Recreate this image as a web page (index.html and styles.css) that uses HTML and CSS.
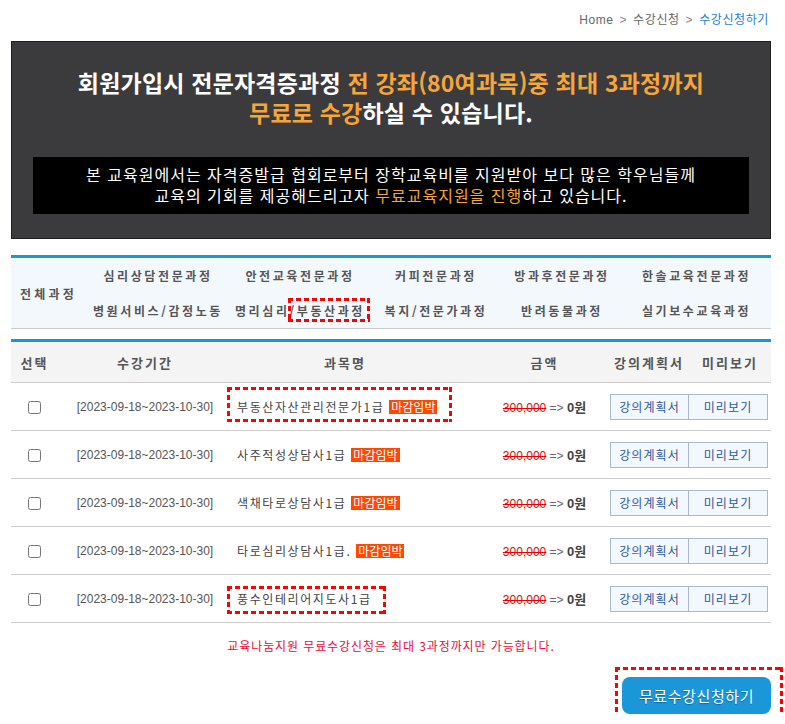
FILE: index.html
```html
<!DOCTYPE html>
<html lang="ko">

<head>
  <meta charset="UTF-8" />
  <meta name="viewport" content="width=device-width, initial-scale=1.0" />
  <title>수강신청하기</title>
  <link rel="stylesheet" href="styles.css">
</head>

<body>
  <div class="wrap">
    <div class="crumb">
      Home <span class="sep">&gt;</span> 수강신청 <span class="sep">&gt;</span> <span class="cur">수강신청하기</span>
    </div>

    <div class="banner">
      <h2>회원가입시 전문자격증과정 <em>전 강좌(80여과목)중 최대 3과정까지</em><br /><em>무료로 수강</em>하실 수 있습니다.</h2>
      <p class="notice">
        본 교육원에서는 자격증발급 협회로부터 장학교육비를 지원받아 보다 많은 학우님들께<br />
        교육의 기회를 제공해드리고자 <em>무료교육지원을 진행</em>하고 있습니다.
      </p>
    </div>

    <div class="cats">
      <div class="all">전체과정</div>
      <a>심리상담전문과정</a>
      <a>안전교육전문과정</a>
      <a>커피전문과정</a>
      <a>방과후전문과정</a>
      <a>한솔교육전문과정</a>
      <a>병원서비스/감정노동</a>
      <a>명리심리<span class="mark mark-nav">/부동산과정</span></a>
      <a>복지/전문가과정</a>
      <a>반려동물과정</a>
      <a>실기보수교육과정</a>
    </div>

    <table class="list">
      <colgroup>
        <col style="width:47px" />
        <col style="width:174px" />
        <col style="width:226px" />
        <col style="width:151px" />
        <col style="width:80px" />
        <col style="width:82px" />
      </colgroup>
      <thead>
        <tr>
          <th>선택</th>
          <th>수강기간</th>
          <th>과목명</th>
          <th class="th-price">금액</th>
          <th>강의계획서</th>
          <th>미리보기</th>
        </tr>
      </thead>
      <tbody>
        <tr>
          <td><input type="checkbox" /></td>
          <td class="date">[2023-09-18~2023-10-30]</td>
          <td class="title"><span class="mark mark-first">부동산자산관리전문가1급 <span class="badge">마감임박</span></span></td>
          <td class="price"><s>300,000</s> =&gt; <b>0원</b></td>
          <td class="btn-l"><a class="mini">강의계획서</a></td>
          <td class="btn-r"><a class="mini">미리보기</a></td>
        </tr>
        <tr>
          <td><input type="checkbox" /></td>
          <td class="date">[2023-09-18~2023-10-30]</td>
          <td class="title">사주적성상담사1급 <span class="badge">마감임박</span></td>
          <td class="price"><s>300,000</s> =&gt; <b>0원</b></td>
          <td class="btn-l"><a class="mini">강의계획서</a></td>
          <td class="btn-r"><a class="mini">미리보기</a></td>
        </tr>
        <tr>
          <td><input type="checkbox" /></td>
          <td class="date">[2023-09-18~2023-10-30]</td>
          <td class="title">색채타로상담사1급 <span class="badge">마감임박</span></td>
          <td class="price"><s>300,000</s> =&gt; <b>0원</b></td>
          <td class="btn-l"><a class="mini">강의계획서</a></td>
          <td class="btn-r"><a class="mini">미리보기</a></td>
        </tr>
        <tr>
          <td><input type="checkbox" /></td>
          <td class="date">[2023-09-18~2023-10-30]</td>
          <td class="title">타로심리상담사1급. <span class="badge">마감임박</span></td>
          <td class="price"><s>300,000</s> =&gt; <b>0원</b></td>
          <td class="btn-l"><a class="mini">강의계획서</a></td>
          <td class="btn-r"><a class="mini">미리보기</a></td>
        </tr>
        <tr>
          <td><input type="checkbox" /></td>
          <td class="date">[2023-09-18~2023-10-30]</td>
          <td class="title"><span class="mark mark-last">풍수인테리어지도사1급</span></td>
          <td class="price"><s>300,000</s> =&gt; <b>0원</b></td>
          <td class="btn-l"><a class="mini">강의계획서</a></td>
          <td class="btn-r"><a class="mini">미리보기</a></td>
        </tr>
      </tbody>
    </table>

    <p class="limit">교육나눔지원 무료수강신청은 최대 3과정까지만 가능합니다.</p>

    <div class="submit-row">
      <button class="submit mark mark-btn">무료수강신청하기</button>
    </div>
  </div>
</body>

</html>
```

FILE: styles.css
```css
* {
  margin: 0;
  padding: 0;
  box-sizing: border-box;
}

body {
  font-family: "Liberation Sans", "Noto Sans CJK KR", sans-serif;
  font-size: 12px;
  color: #555;
  background-color: #fff;
}

.wrap {
  width: 760px;
  margin-left: 11px;
}

/* breadcrumb */
.crumb {
  height: 41px;
  line-height: 40px;
  text-align: right;
  padding-right: 2px;
  color: #666;
  letter-spacing: 0.6px;
}

.crumb .sep {
  color: #888;
  margin: 0 2px;
}

.crumb .cur {
  color: #1a7fd0;
}

/* top banner */
.banner {
  background-color: #3b3b3d;
  border: 1px solid #1e1e1e;
  padding: 25px 21px 24px;
  text-align: center;
  font-family: "Noto Sans CJK KR", sans-serif;
}

.banner h2 {
  font-size: 23px;
  line-height: 30px;
  font-weight: 700;
  letter-spacing: 0.2px;
  color: #fff;
}

.banner em {
  font-style: normal;
  color: #f6a53b;
}

.notice {
  margin-top: 30px;
  background-color: #000;
  color: #fff;
  font-size: 16px;
  line-height: 21px;
  letter-spacing: 1px;
  padding: 7px 0 8px;
}

/* course categories */
.cats {
  margin-top: 16px;
  display: grid;
  grid-template-columns: 75px 144px 140px 132px 120px 149px;
  grid-template-rows: 35px 35px;
  background-color: #f3f8fd;
  border-top: 3px solid #1b96db;
  border-bottom: 1px solid #ccc;
  font-family: "Noto Sans CJK KR", sans-serif;
  font-size: 12px;
  font-weight: 700;
  letter-spacing: 2.6px;
  color: #555;
}

.cats .all,
.cats a {
  display: flex;
  align-items: center;
  justify-content: center;
  white-space: nowrap;
}

.cats .all {
  grid-row: span 2;
  letter-spacing: 3.2px;
}

/* red dashed marks */
.mark {
  position: relative;
}

.mark::after {
  content: "";
  position: absolute;
  pointer-events: none;
  background:
    repeating-linear-gradient(90deg, #f00 0 5px, transparent 5px 8px) top left / 100% 3px no-repeat,
    repeating-linear-gradient(90deg, #f00 0 5px, transparent 5px 8px) bottom left / 100% 3px no-repeat,
    repeating-linear-gradient(180deg, #f00 0 5px, transparent 5px 8px) top left / 3px 100% no-repeat,
    repeating-linear-gradient(180deg, #f00 0 5px, transparent 5px 8px) top right / 3px 100% no-repeat;
}

.mark-nav::after {
  left: -2px;
  right: -5px;
  top: -4px;
  bottom: -3px;
}

.mark-first::after {
  left: -10px;
  right: -15px;
  top: -11px;
  bottom: -7px;
}

.mark-last::after {
  left: -10px;
  right: -14px;
  top: -4px;
  bottom: -7px;
}

.mark-btn::after {
  left: -7px;
  right: -12px;
  top: -10px;
  bottom: -8px;
}

/* course list */
.list {
  width: 100%;
  margin-top: 10px;
  border-collapse: collapse;
  table-layout: fixed;
  border-top: 3px solid #1b96db;
}

.list th {
  height: 42px;
  background-color: #f4f4f4;
  border-bottom: 1px solid #ccc;
  font-family: "Noto Sans CJK KR", sans-serif;
  font-size: 13px;
  font-weight: 700;
  letter-spacing: 2px;
  color: #555;
}

.list th.th-price {
  padding-left: 22px;
}

.list td {
  height: 48px;
  border-bottom: 1px solid #ccc;
  text-align: center;
  white-space: nowrap;
}

.list input {
  width: 13px;
  height: 13px;
  margin: 0;
  vertical-align: middle;
}

.date {
  color: #555;
  font-size: 12px;
}

.title {
  text-align: left !important;
  padding-left: 5px;
  font-family: "Noto Sans CJK KR", sans-serif;
  letter-spacing: 1.6px;
  color: #444;
}

.badge {
  display: inline-block;
  padding: 0 2px;
  line-height: 14px;
  font-size: 12px;
  letter-spacing: 0;
  background-color: #ff4800;
  color: #fff;
}

.price {
  padding-left: 22px;
  color: #666;
}

.price s {
  color: #e00;
}

.price b {
  color: #444;
  font-size: 13px;
}

.btn-l {
  text-align: right !important;
}

.btn-r {
  text-align: left !important;
}

.mini {
  display: inline-block;
  width: 79px;
  height: 26px;
  line-height: 24px;
  border: 1px solid #a9b8cc;
  background-color: #f3f8fe;
  color: #2a5a9a;
  font-family: "Noto Sans CJK KR", sans-serif;
  font-size: 12px;
  letter-spacing: 1.1px;
  text-align: center;
}

.btn-r .mini {
  margin-left: -1px;
  width: 80px;
}

.limit {
  margin-top: 15px;
  text-align: center;
  line-height: 16px;
  letter-spacing: 0.9px;
  color: #ec0a3c;
  font-family: "Noto Sans CJK KR", sans-serif;
}

.submit-row {
  margin-top: 23px;
  display: flex;
  justify-content: flex-end;
}

.submit {
  width: 149px;
  height: 37px;
  border: none;
  border-radius: 8px;
  background-color: #1a97d9;
  color: #fff;
  font-family: "Noto Sans CJK KR", sans-serif;
  font-size: 15px;
  letter-spacing: 0.6px;
  text-shadow: 0 1px 1px rgba(0, 0, 0, 0.3);
}
```
